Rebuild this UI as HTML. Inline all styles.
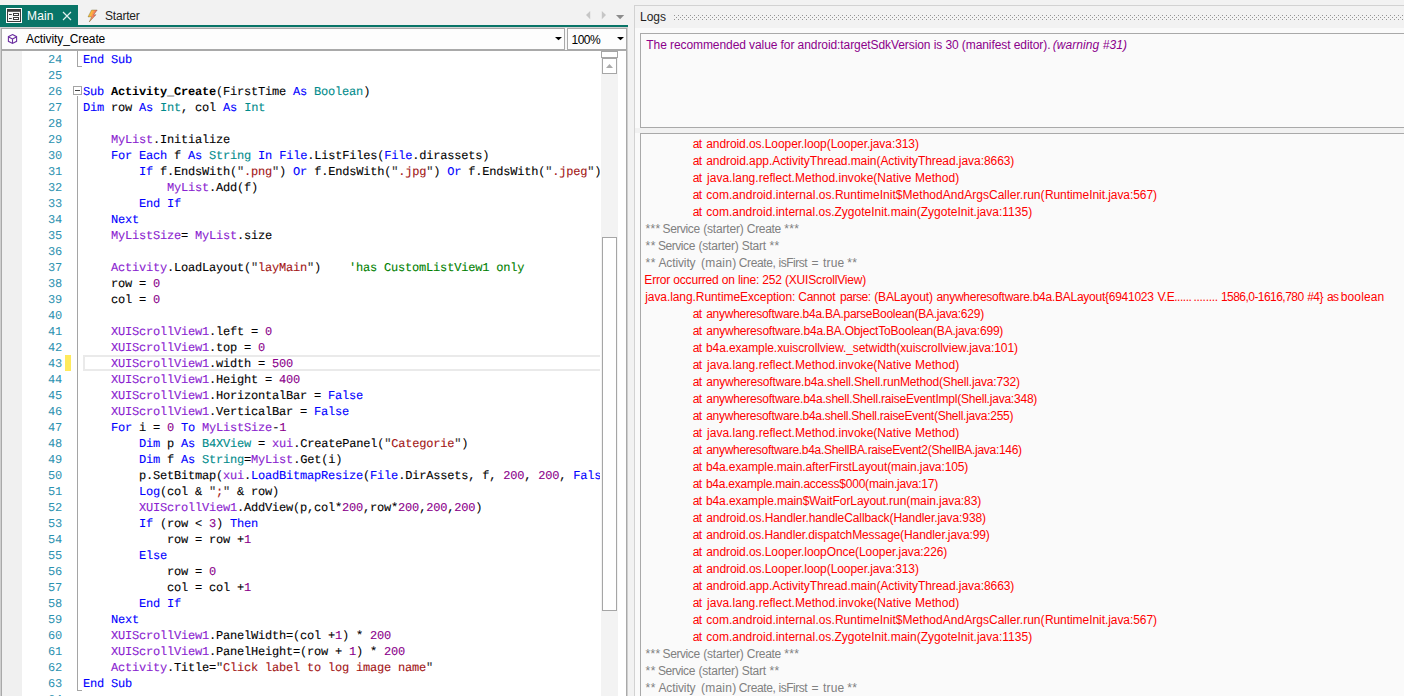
<!DOCTYPE html>
<html><head><meta charset="utf-8"><title>B4A</title>
<style>
html,body{margin:0;padding:0}
body{width:1404px;height:696px;overflow:hidden;background:#f2f2f2;position:relative;font-family:"Liberation Sans",sans-serif;font-size:12px;color:#1e1e1e}
.a{position:absolute}
/* editor */
#tab{left:0;top:5px;width:78px;height:22px;background:#097568}
#tline{left:0;top:25px;width:628px;height:2px;background:#097568}
#tabtxt{left:27px;top:9px;color:#fff;line-height:14px;letter-spacing:0.15px}
#startxt{left:105px;top:9px;line-height:14px;color:#1e1e1e;letter-spacing:-0.2px}
#edwrap{left:0;top:27px;width:628px;height:669px;background:#a9a9a9;border-top:1px solid #d4d4d4;border-left:1px solid #cfcfcf;border-right:1px solid #cfcfcf;box-sizing:border-box}
#edl{display:none}
#combo1{left:2px;top:29px;width:562px;height:20px;background:#fdfdfd}
#combogap{left:565px;top:28px;width:2px;height:22px;background:#f7f7f7}
#combo2{left:568px;top:29px;width:58px;height:20px;background:#fdfdfd}
#c1txt{left:26px;top:32px;line-height:14px;color:#000;letter-spacing:-0.1px}
#c2txt{left:571.5px;top:33px;line-height:14px;color:#000;letter-spacing:-0.5px}
#code{left:2px;top:51px;width:624px;height:645px;background:#fff;overflow:hidden}
#margin{left:2px;top:51px;width:20px;height:645px;background:#f0f0f0}
.ln{position:absolute;left:22px;width:40px;text-align:right;height:16px;line-height:16px;font-family:"Liberation Mono",monospace;font-size:12px;letter-spacing:-0.2px;color:#2b91af;text-rendering:geometricPrecision}
.cl{position:absolute;left:83px;height:16px;line-height:16px;font-family:"Liberation Mono",monospace;font-size:12px;letter-spacing:-0.2px;color:#000;white-space:pre;-webkit-text-stroke:0.1px;text-rendering:geometricPrecision}
#codeclip{left:0;top:0;width:600px;height:696px;overflow:hidden}
.k{color:#0000ff}.t{color:#008b8b}.i{color:#8a22d0}.n{color:#8b008b}.s{color:#a31515}.q{color:#333}.c{color:#008000}.b{font-weight:bold;-webkit-text-stroke:0}
#foldline{left:77px;top:51px;width:1px;height:645px;background:#a5a5a5}
#curline{left:83px;top:355px;width:517px;height:16px;border:2px solid #eaeaea;border-right:none;box-sizing:border-box}
#chg{left:65px;top:355px;width:6px;height:16px;background:#ffea5c}
/* scrollbar */
#sbtrack{left:601px;top:51px;width:17px;height:645px;background:#f3f3f3}
#sbsplit{left:601px;top:51px;width:17px;height:7px;background:#fff;border:1px solid #a6a6a6;box-sizing:border-box}
#sbup{left:602px;top:58px;width:15px;height:16px;background:#fff;border:1px solid #a6a6a6;box-sizing:border-box}
#sbthumb{left:602px;top:237px;width:15px;height:374px;background:#fff;border:1px solid #a6a6a6;box-sizing:border-box}
/* logs */
#lgpanel{left:634px;top:5px;width:770px;height:691px;background:#fafafa;border-left:1px solid #d2d2d2;border-top:1px solid #d2d2d2;box-sizing:border-box}
#lghead{left:635px;top:6px;width:769px;height:22px;background:#f2f2f2}
#lgtxt{left:640px;top:10px;line-height:14px;color:#1e1e1e}
#grip{left:674px;top:15px;width:730px;height:5px}
#box1{left:640px;top:33px;width:770px;height:95px;background:#fafafa;border:1px solid #a9a9a9;box-sizing:border-box}
#box2{left:640px;top:133px;width:770px;height:570px;background:#fafafa;border:1px solid #a9a9a9;box-sizing:border-box}
.ll{position:absolute;white-space:pre;height:17px;line-height:17px;font-size:12px}
.r{color:#ff0000}.g{color:#808080}
.wn{color:#8b008b}
</style></head><body>

<!-- tab strip -->
<div class="a" id="tab"></div>
<div class="a" id="tline"></div>
<svg class="a" style="left:6px;top:8px" width="16" height="15" viewBox="0 0 16 15">
 <rect x="0" y="0" width="16" height="15" fill="#fff"/>
 <rect x="1" y="1" width="14" height="13" fill="#3c3c3c"/>
 <rect x="2" y="3.8" width="12" height="9.2" fill="#f6f6f6"/>
 <rect x="3" y="6" width="2.8" height="1" fill="#3c3c3c"/><rect x="3" y="10" width="2.8" height="1" fill="#3c3c3c"/>
 <rect x="7" y="5" width="6" height="3" fill="#3c3c3c"/><rect x="8" y="6" width="4" height="1" fill="#fff"/>
 <rect x="7" y="9" width="6" height="3" fill="#3c3c3c"/><rect x="8" y="10" width="4" height="1" fill="#fff"/>
</svg>
<div class="a" id="tabtxt">Main</div>
<svg class="a" style="left:62px;top:11px" width="10" height="10" viewBox="0 0 10 10"><path d="M1 1 L9 9 M9 1 L1 9" stroke="#e4f1ef" stroke-width="1.15" fill="none"/></svg>
<svg class="a" style="left:86px;top:8px" width="14" height="16" viewBox="0 0 14 16">
 <defs><linearGradient id="lg" x1="0" y1="0" x2="1" y2="0.5"><stop offset="0" stop-color="#dccc2c"/><stop offset="0.4" stop-color="#fdb83c"/><stop offset="0.75" stop-color="#f4686c"/><stop offset="1" stop-color="#c84858"/></linearGradient></defs>
 <path d="M5.6 2 L11.2 2 L7.6 6.9 L10 6.7 L3.2 14 L5.6 8.8 L2 8.9 Z" fill="url(#lg)" stroke="#5e5420" stroke-opacity="0.6" stroke-width="0.6"/>
</svg>
<div class="a" id="startxt">Starter</div>
<svg class="a" style="left:584px;top:10px" width="44" height="12" viewBox="0 0 44 12">
 <path d="M6.2 1 L6.2 9.2 L2 5.1 Z" fill="#c6c6c6"/>
 <path d="M17.8 1 L17.8 9.2 L22 5.1 Z" fill="#c6c6c6"/>
 <path d="M32 5 L40.2 5 L36.1 9.2 Z" fill="#8c8c8c"/>
</svg>

<!-- editor frame -->
<div class="a" id="edwrap"></div>
<div class="a" id="edl"></div>
<div class="a" id="combo1"></div><div class="a" id="combogap"></div><div class="a" id="combo2"></div>
<svg class="a" style="left:7px;top:33px" width="11" height="12" viewBox="0 0 11 12">
 <path d="M5.5 1.5 L9.6 3.7 L9.6 8.3 L5.5 10.5 L1.4 8.3 L1.4 3.7 Z M5.5 10.5 L5.5 6 M5.5 6 L1.7 3.9 M5.5 6 L9.3 3.9" fill="none" stroke="#6b2fa0" stroke-width="1.1"/>
</svg>
<div class="a" id="c1txt">Activity_Create</div>
<svg class="a" style="left:555px;top:36px" width="8" height="5" viewBox="0 0 8 5"><path d="M0 0.9 L7 0.9 L3.5 4.3 Z" fill="#000"/></svg>
<div class="a" id="c2txt">100%</div>
<svg class="a" style="left:617px;top:36px" width="8" height="5" viewBox="0 0 8 5"><path d="M0 0.9 L7 0.9 L3.5 4.3 Z" fill="#000"/></svg>

<div class="a" id="code"></div>
<div class="a" id="margin"></div>
<div class="a" id="foldline"></div>
<div class="a" id="chg"></div>
<div class="a" id="curline"></div>
<div class="a" id="codeclip">
<div class="ln" style="top:52px">24</div><div class="cl" style="top:52px"><span class="k">End Sub</span></div>
<div class="ln" style="top:68px">25</div><div class="cl" style="top:68px"></div>
<div class="ln" style="top:84px">26</div><div class="cl" style="top:84px"><span class="k">Sub</span> <span class="b">Activity_Create</span>(FirstTime <span class="k">As</span> <span class="t">Boolean</span>)</div>
<div class="ln" style="top:100px">27</div><div class="cl" style="top:100px"><span class="k">Dim</span> row <span class="k">As</span> <span class="t">Int</span>, col <span class="k">As</span> <span class="t">Int</span></div>
<div class="ln" style="top:116px">28</div><div class="cl" style="top:116px"></div>
<div class="ln" style="top:132px">29</div><div class="cl" style="top:132px">    <span class="i">MyList</span>.Initialize</div>
<div class="ln" style="top:148px">30</div><div class="cl" style="top:148px">    <span class="k">For Each</span> f <span class="k">As</span> <span class="t">String</span> <span class="k">In</span> <span class="k">File</span>.ListFiles(<span class="k">File</span>.dirassets)</div>
<div class="ln" style="top:164px">31</div><div class="cl" style="top:164px">        <span class="k">If</span> f.EndsWith(<span class="q">"</span><span class="s">.png</span><span class="q">"</span>) <span class="k">Or</span> f.EndsWith(<span class="q">"</span><span class="s">.jpg</span><span class="q">"</span>) <span class="k">Or</span> f.EndsWith(<span class="q">"</span><span class="s">.jpeg</span><span class="q">"</span>)</div>
<div class="ln" style="top:180px">32</div><div class="cl" style="top:180px">            <span class="i">MyList</span>.Add(f)</div>
<div class="ln" style="top:196px">33</div><div class="cl" style="top:196px">        <span class="k">End If</span></div>
<div class="ln" style="top:212px">34</div><div class="cl" style="top:212px">    <span class="k">Next</span></div>
<div class="ln" style="top:228px">35</div><div class="cl" style="top:228px">    <span class="i">MyListSize</span>= <span class="i">MyList</span>.size</div>
<div class="ln" style="top:244px">36</div><div class="cl" style="top:244px"></div>
<div class="ln" style="top:260px">37</div><div class="cl" style="top:260px">    <span class="i">Activity</span>.LoadLayout(<span class="q">"</span><span class="s">layMain</span><span class="q">"</span>)    <span class="c">&#x27;has CustomListView1 only</span></div>
<div class="ln" style="top:276px">38</div><div class="cl" style="top:276px">    row = <span class="n">0</span></div>
<div class="ln" style="top:292px">39</div><div class="cl" style="top:292px">    col = <span class="n">0</span></div>
<div class="ln" style="top:308px">40</div><div class="cl" style="top:308px"></div>
<div class="ln" style="top:324px">41</div><div class="cl" style="top:324px">    <span class="i">XUIScrollView1</span>.left = <span class="n">0</span></div>
<div class="ln" style="top:340px">42</div><div class="cl" style="top:340px">    <span class="i">XUIScrollView1</span>.top = <span class="n">0</span></div>
<div class="ln" style="top:356px">43</div><div class="cl" style="top:356px">    <span class="i">XUIScrollView1</span>.width = <span class="n">500</span></div>
<div class="ln" style="top:372px">44</div><div class="cl" style="top:372px">    <span class="i">XUIScrollView1</span>.Height = <span class="n">400</span></div>
<div class="ln" style="top:388px">45</div><div class="cl" style="top:388px">    <span class="i">XUIScrollView1</span>.HorizontalBar = <span class="k">False</span></div>
<div class="ln" style="top:404px">46</div><div class="cl" style="top:404px">    <span class="i">XUIScrollView1</span>.VerticalBar = <span class="k">False</span></div>
<div class="ln" style="top:420px">47</div><div class="cl" style="top:420px">    <span class="k">For</span> i = <span class="n">0</span> <span class="k">To</span> <span class="i">MyListSize</span>-<span class="n">1</span></div>
<div class="ln" style="top:436px">48</div><div class="cl" style="top:436px">        <span class="k">Dim</span> p <span class="k">As</span> <span class="t">B4XView</span> = <span class="i">xui</span>.CreatePanel(<span class="q">"</span><span class="s">Categorie</span><span class="q">"</span>)</div>
<div class="ln" style="top:452px">49</div><div class="cl" style="top:452px">        <span class="k">Dim</span> f <span class="k">As</span> <span class="t">String</span>=<span class="i">MyList</span>.Get(i)</div>
<div class="ln" style="top:468px">50</div><div class="cl" style="top:468px">        p.SetBitmap(<span class="i">xui</span>.<span class="k">LoadBitmapResize</span>(<span class="k">File</span>.DirAssets, f, <span class="n">200</span>, <span class="n">200</span>, <span class="k">Fals</span></div>
<div class="ln" style="top:484px">51</div><div class="cl" style="top:484px">        <span class="k">Log</span>(col &amp; <span class="q">"</span><span class="s">;</span><span class="q">"</span> &amp; row)</div>
<div class="ln" style="top:500px">52</div><div class="cl" style="top:500px">        <span class="i">XUIScrollView1</span>.AddView(p,col*<span class="n">200</span>,row*<span class="n">200</span>,<span class="n">200</span>,<span class="n">200</span>)</div>
<div class="ln" style="top:516px">53</div><div class="cl" style="top:516px">        <span class="k">If</span> (row &lt; <span class="n">3</span>) <span class="k">Then</span></div>
<div class="ln" style="top:532px">54</div><div class="cl" style="top:532px">            row = row +<span class="n">1</span></div>
<div class="ln" style="top:548px">55</div><div class="cl" style="top:548px">        <span class="k">Else</span></div>
<div class="ln" style="top:564px">56</div><div class="cl" style="top:564px">            row = <span class="n">0</span></div>
<div class="ln" style="top:580px">57</div><div class="cl" style="top:580px">            col = col +<span class="n">1</span></div>
<div class="ln" style="top:596px">58</div><div class="cl" style="top:596px">        <span class="k">End If</span></div>
<div class="ln" style="top:612px">59</div><div class="cl" style="top:612px">    <span class="k">Next</span></div>
<div class="ln" style="top:628px">60</div><div class="cl" style="top:628px">    <span class="i">XUIScrollView1</span>.PanelWidth=(col +<span class="n">1</span>) * <span class="n">200</span></div>
<div class="ln" style="top:644px">61</div><div class="cl" style="top:644px">    <span class="i">XUIScrollView1</span>.PanelHeight=(row + <span class="n">1</span>) * <span class="n">200</span></div>
<div class="ln" style="top:660px">62</div><div class="cl" style="top:660px">    <span class="i">Activity</span>.Title=<span class="q">"</span><span class="s">Click label to log image name</span><span class="q">"</span></div>
<div class="ln" style="top:676px">63</div><div class="cl" style="top:676px"><span class="k">End Sub</span></div>
<div class="ln" style="top:692px">64</div><div class="cl" style="top:692px"></div>

</div>
<!-- fold markers -->
<div class="a" style="left:77px;top:66px;width:5px;height:1px;background:#a5a5a5"></div>
<div class="a" style="left:77px;top:67px;width:1px;height:19px;background:#fff"></div>
<div class="a" style="left:73px;top:86px;width:9px;height:9px;background:#fff;border:1px solid #a5a5a5;box-sizing:border-box"></div>
<div class="a" style="left:75px;top:90px;width:5px;height:1px;background:#404040"></div>
<div class="a" style="left:77px;top:95px;width:1px;height:1px;background:#fff"></div>
<div class="a" style="left:77px;top:691px;width:1px;height:5px;background:#fff"></div>
<div class="a" style="left:77px;top:690px;width:5px;height:1px;background:#a5a5a5"></div>

<!-- scrollbar -->
<div class="a" id="sbtrack"></div>
<div class="a" id="sbsplit"></div>
<div class="a" id="sbup"></div>
<svg class="a" style="left:606px;top:63px" width="8" height="5" viewBox="0 0 8 5"><path d="M0 4.9 L7 4.9 L3.5 0.9 Z" fill="#ababab"/></svg>
<div class="a" id="sbthumb"></div>

<!-- logs -->
<div class="a" id="lgpanel"></div>
<div class="a" id="lghead"></div>
<div class="a" id="lgtxt">Logs</div>
<svg class="a" id="grip" width="730" height="5">
 <defs><pattern id="gp" width="4" height="4" patternUnits="userSpaceOnUse"><rect x="0" y="0" width="1" height="1" fill="#949494"/><rect x="2" y="2" width="1" height="1" fill="#949494"/></pattern></defs>
 <rect width="730" height="5" fill="url(#gp)"/>
</svg>
<div class="a" style="left:635px;top:128px;width:769px;height:5px;background:#f1f1f1"></div>
<div class="a" id="box1"></div>
<div class="ll wn" style="left:646.33px;top:37px;letter-spacing:-0.082px;">The recommended value for android:targetSdkVersion is 30 (manifest editor).</div>
<div class="ll wn" style="left:1052.64px;top:37px;letter-spacing:0.084px;font-style:italic">(warning #31)</div>

<div class="a" id="box2"></div>
<div class="ll r" style="left:692.69px;top:136px;letter-spacing:-0.700px;">at</div>
<div class="ll r" style="left:706.19px;top:136px;letter-spacing:-0.072px;">android.os.Looper.loop(Looper.java:313)</div>
<div class="ll r" style="left:692.69px;top:153px;letter-spacing:-0.700px;">at</div>
<div class="ll r" style="left:706.19px;top:153px;letter-spacing:-0.059px;">android.app.ActivityThread.main(ActivityThread.java:8663)</div>
<div class="ll r" style="left:692.69px;top:170px;letter-spacing:-0.700px;">at</div>
<div class="ll r" style="left:706.99px;top:170px;letter-spacing:0.030px;">java.lang.reflect.Method.invoke(Native Method)</div>
<div class="ll r" style="left:692.69px;top:187px;letter-spacing:-0.700px;">at</div>
<div class="ll r" style="left:706.19px;top:187px;letter-spacing:0.026px;">com.android.internal.os.RuntimeInit$MethodAndArgsCaller.run(</div>
<div class="ll r" style="left:1044.92px;top:187px;letter-spacing:-0.063px;">RuntimeInit.java:567)</div>
<div class="ll r" style="left:692.69px;top:204px;letter-spacing:-0.700px;">at</div>
<div class="ll r" style="left:706.19px;top:204px;letter-spacing:0.011px;">com.android.internal.os.ZygoteInit.main(ZygoteInit.java:1135)</div>
<div class="ll g" style="left:645.41px;top:221px;letter-spacing:0.383px;">***</div>
<div class="ll g" style="left:662.56px;top:221px;letter-spacing:-0.406px;">Service</div>
<div class="ll g" style="left:703.16px;top:221px;letter-spacing:-0.164px;">(starter)</div>
<div class="ll g" style="left:746.79px;top:221px;letter-spacing:-0.318px;">Create</div>
<div class="ll g" style="left:784.21px;top:221px;letter-spacing:0.333px;">***</div>
<div class="ll g" style="left:645.41px;top:238px;letter-spacing:0.637px;">**</div>
<div class="ll g" style="left:657.96px;top:238px;letter-spacing:-0.440px;">Service</div>
<div class="ll g" style="left:698.56px;top:238px;letter-spacing:-0.214px;">(starter)</div>
<div class="ll g" style="left:741.86px;top:238px;letter-spacing:-0.303px;">Start</div>
<div class="ll g" style="left:769.41px;top:238px;letter-spacing:0.337px;">**</div>
<div class="ll g" style="left:645.41px;top:255px;letter-spacing:0.637px;">**</div>
<div class="ll g" style="left:658.48px;top:255px;letter-spacing:-0.124px;">Activity</div>
<div class="ll g" style="left:700.96px;top:255px;letter-spacing:0.235px;">(main)</div>
<div class="ll g" style="left:738.79px;top:255px;letter-spacing:-0.379px;">Create,</div>
<div class="ll g" style="left:778.50px;top:255px;letter-spacing:-0.468px;">isFirst</div>
<div class="ll g" style="left:811.61px;top:255px;letter-spacing:0.662px;">=</div>
<div class="ll g" style="left:823.12px;top:255px;letter-spacing:0.142px;">true</div>
<div class="ll g" style="left:847.21px;top:255px;letter-spacing:0.337px;">**</div>
<div class="ll r" style="left:644.32px;top:272px;letter-spacing:-0.171px;">Error occurred on line: 252 (XUIScrollView)</div>
<div class="ll r" style="left:645.19px;top:289px;letter-spacing:-0.073px;">java.lang.RuntimeException:</div>
<div class="ll r" style="left:798.29px;top:289px;letter-spacing:-0.301px;">Cannot</div>
<div class="ll r" style="left:840.03px;top:289px;letter-spacing:-0.458px;">parse:</div>
<div class="ll r" style="left:874.16px;top:289px;letter-spacing:-0.127px;">(BALayout)</div>
<div class="ll r" style="left:936.39px;top:289px;letter-spacing:-0.259px;">anywheresoftware.b4a.BALayout{6941023</div>
<div class="ll r" style="left:1157.45px;top:289px;letter-spacing:-0.475px;">V.E......</div>
<div class="ll r" style="left:1193.50px;top:289px;letter-spacing:-0.297px;">........</div>
<div class="ll r" style="left:1220.99px;top:289px;letter-spacing:-0.548px;">1586,0-1616,780</div>
<div class="ll r" style="left:1307.15px;top:289px;letter-spacing:-0.445px;">#4}</div>
<div class="ll r" style="left:1326.99px;top:289px;letter-spacing:-0.700px;">as</div>
<div class="ll r" style="left:1340.73px;top:289px;letter-spacing:0.139px;">boolean</div>
<div class="ll r" style="left:692.69px;top:306px;letter-spacing:-0.700px;">at</div>
<div class="ll r" style="left:706.19px;top:306px;letter-spacing:-0.255px;">anywheresoftware.b4a.BA.parseBoolean(BA.java:629)</div>
<div class="ll r" style="left:692.69px;top:323px;letter-spacing:-0.700px;">at</div>
<div class="ll r" style="left:706.19px;top:323px;letter-spacing:-0.203px;">anywheresoftware.b4a.BA.ObjectToBoolean(BA.java:699)</div>
<div class="ll r" style="left:692.69px;top:340px;letter-spacing:-0.700px;">at</div>
<div class="ll r" style="left:705.93px;top:340px;letter-spacing:-0.070px;">b4a.example.xuiscrollview._setwidth(xuiscrollview.java:101)</div>
<div class="ll r" style="left:692.69px;top:357px;letter-spacing:-0.700px;">at</div>
<div class="ll r" style="left:706.99px;top:357px;letter-spacing:0.030px;">java.lang.reflect.Method.invoke(Native Method)</div>
<div class="ll r" style="left:692.69px;top:374px;letter-spacing:-0.700px;">at</div>
<div class="ll r" style="left:706.19px;top:374px;letter-spacing:-0.158px;">anywheresoftware.b4a.shell.Shell.runMethod(Shell.java:732)</div>
<div class="ll r" style="left:692.69px;top:391px;letter-spacing:-0.700px;">at</div>
<div class="ll r" style="left:706.19px;top:391px;letter-spacing:-0.221px;">anywheresoftware.b4a.shell.Shell.raiseEventImpl(Shell.java:348)</div>
<div class="ll r" style="left:692.69px;top:408px;letter-spacing:-0.700px;">at</div>
<div class="ll r" style="left:706.19px;top:408px;letter-spacing:-0.257px;">anywheresoftware.b4a.shell.Shell.raiseEvent(Shell.java:255)</div>
<div class="ll r" style="left:692.69px;top:425px;letter-spacing:-0.700px;">at</div>
<div class="ll r" style="left:706.99px;top:425px;letter-spacing:0.030px;">java.lang.reflect.Method.invoke(Native Method)</div>
<div class="ll r" style="left:692.69px;top:442px;letter-spacing:-0.700px;">at</div>
<div class="ll r" style="left:706.19px;top:442px;letter-spacing:-0.298px;">anywheresoftware.b4a.ShellBA.raiseEvent2(ShellBA.java:146)</div>
<div class="ll r" style="left:692.69px;top:459px;letter-spacing:-0.700px;">at</div>
<div class="ll r" style="left:705.93px;top:459px;letter-spacing:-0.107px;">b4a.example.main.afterFirstLayout(main.java:105)</div>
<div class="ll r" style="left:692.69px;top:476px;letter-spacing:-0.700px;">at</div>
<div class="ll r" style="left:705.93px;top:476px;letter-spacing:-0.231px;">b4a.example.main.access$000(main.java:17)</div>
<div class="ll r" style="left:692.69px;top:493px;letter-spacing:-0.700px;">at</div>
<div class="ll r" style="left:705.93px;top:493px;letter-spacing:-0.079px;">b4a.example.main$WaitForLayout.run(main.java:83)</div>
<div class="ll r" style="left:692.69px;top:510px;letter-spacing:-0.700px;">at</div>
<div class="ll r" style="left:706.19px;top:510px;letter-spacing:-0.085px;">android.os.Handler.handleCallback(Handler.java:938)</div>
<div class="ll r" style="left:692.69px;top:527px;letter-spacing:-0.700px;">at</div>
<div class="ll r" style="left:706.19px;top:527px;letter-spacing:-0.104px;">android.os.Handler.dispatchMessage(Handler.java:99)</div>
<div class="ll r" style="left:692.69px;top:544px;letter-spacing:-0.700px;">at</div>
<div class="ll r" style="left:706.19px;top:544px;letter-spacing:-0.072px;">android.os.Looper.loopOnce(Looper.java:226)</div>
<div class="ll r" style="left:692.69px;top:561px;letter-spacing:-0.700px;">at</div>
<div class="ll r" style="left:706.19px;top:561px;letter-spacing:-0.072px;">android.os.Looper.loop(Looper.java:313)</div>
<div class="ll r" style="left:692.69px;top:578px;letter-spacing:-0.700px;">at</div>
<div class="ll r" style="left:706.19px;top:578px;letter-spacing:-0.059px;">android.app.ActivityThread.main(ActivityThread.java:8663)</div>
<div class="ll r" style="left:692.69px;top:595px;letter-spacing:-0.700px;">at</div>
<div class="ll r" style="left:706.99px;top:595px;letter-spacing:0.030px;">java.lang.reflect.Method.invoke(Native Method)</div>
<div class="ll r" style="left:692.69px;top:612px;letter-spacing:-0.700px;">at</div>
<div class="ll r" style="left:706.19px;top:612px;letter-spacing:0.026px;">com.android.internal.os.RuntimeInit$MethodAndArgsCaller.run(</div>
<div class="ll r" style="left:1044.92px;top:612px;letter-spacing:-0.063px;">RuntimeInit.java:567)</div>
<div class="ll r" style="left:692.69px;top:629px;letter-spacing:-0.700px;">at</div>
<div class="ll r" style="left:706.19px;top:629px;letter-spacing:0.011px;">com.android.internal.os.ZygoteInit.main(ZygoteInit.java:1135)</div>
<div class="ll g" style="left:645.41px;top:646px;letter-spacing:0.383px;">***</div>
<div class="ll g" style="left:662.56px;top:646px;letter-spacing:-0.406px;">Service</div>
<div class="ll g" style="left:703.16px;top:646px;letter-spacing:-0.164px;">(starter)</div>
<div class="ll g" style="left:746.79px;top:646px;letter-spacing:-0.318px;">Create</div>
<div class="ll g" style="left:784.21px;top:646px;letter-spacing:0.333px;">***</div>
<div class="ll g" style="left:645.41px;top:663px;letter-spacing:0.637px;">**</div>
<div class="ll g" style="left:657.96px;top:663px;letter-spacing:-0.440px;">Service</div>
<div class="ll g" style="left:698.56px;top:663px;letter-spacing:-0.214px;">(starter)</div>
<div class="ll g" style="left:741.86px;top:663px;letter-spacing:-0.303px;">Start</div>
<div class="ll g" style="left:769.41px;top:663px;letter-spacing:0.337px;">**</div>
<div class="ll g" style="left:645.41px;top:680px;letter-spacing:0.637px;">**</div>
<div class="ll g" style="left:658.48px;top:680px;letter-spacing:-0.124px;">Activity</div>
<div class="ll g" style="left:700.96px;top:680px;letter-spacing:0.235px;">(main)</div>
<div class="ll g" style="left:738.79px;top:680px;letter-spacing:-0.379px;">Create,</div>
<div class="ll g" style="left:778.50px;top:680px;letter-spacing:-0.468px;">isFirst</div>
<div class="ll g" style="left:811.61px;top:680px;letter-spacing:0.662px;">=</div>
<div class="ll g" style="left:823.12px;top:680px;letter-spacing:0.142px;">true</div>
<div class="ll g" style="left:847.21px;top:680px;letter-spacing:0.337px;">**</div>

</body></html>
